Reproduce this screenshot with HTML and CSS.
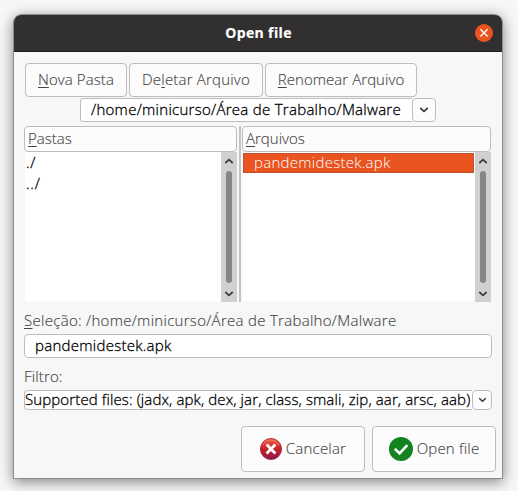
FILE: index.html
```html
<!DOCTYPE html>
<html lang="pt-BR">
<head>
<meta charset="utf-8">
<title>Open file</title>
<link rel="stylesheet" href="styles.css">
</head>
<body>
<main class="window">
  <header class="titlebar">
    <h1>Open file</h1>
    <button class="close" aria-label="Fechar"><svg width="18" height="18" viewBox="0 0 18 18"><path d="M5.4 5.3l7.2 7.2m0-7.2l-7.2 7.2" fill="none" stroke="#fff" stroke-width="1.3"/></svg></button>
  </header>
  <div class="content">
    <div class="toolbar">
      <button class="btn new"><span><u>N</u>ova Pasta</span></button>
      <button class="btn delete"><span>De<u>l</u>etar Arquivo</span></button>
      <button class="btn rename"><span><u>R</u>enomear Arquivo</span></button>
    </div>
    <div class="combo path">
      <div class="value"><span>/home/minicurso/Área de Trabalho/Malware</span></div>
      <button class="drop" aria-label="Abrir"><svg width="10" height="6" viewBox="0 0 10 6"><path d="M1.3 1l3.7 3.4L8.7 1"/></svg></button>
    </div>
    <div class="panes">
      <section class="pane folders">
        <div class="head"><span><u>P</u>astas</span></div>
        <div class="body">
          <div class="list"><div class="row">./</div><div class="row">../</div></div>
          <div class="scroll"><svg width="10" height="6" viewBox="0 0 10 6"><path d="M1.3 5l3.7-3.4L8.7 5"/></svg><i class="thumb"></i><svg width="10" height="6" viewBox="0 0 10 6"><path d="M1.3 1l3.7 3.4L8.7 1"/></svg></div>
        </div>
      </section>
      <div class="divider"></div>
      <section class="pane files">
        <div class="head"><span><u>A</u>rquivos</span></div>
        <div class="body">
          <div class="list"><div class="row selected"><span>pandemidestek.apk</span></div></div>
          <div class="scroll"><svg width="10" height="6" viewBox="0 0 10 6"><path d="M1.3 5l3.7-3.4L8.7 5"/></svg><i class="thumb"></i><svg width="10" height="6" viewBox="0 0 10 6"><path d="M1.3 1l3.7 3.4L8.7 1"/></svg></div>
        </div>
      </section>
    </div>
    <div class="label selection"><span><u>S</u>eleção: /home/minicurso/Área de Trabalho/Malware</span></div>
    <div class="entry"><span>pandemidestek.apk</span></div>
    <div class="label filter"><span>Filtro:</span></div>
    <div class="combo types">
      <div class="value"><span>Supported files: (jadx, apk, dex, jar, class, smali, zip, aar, arsc, aab)</span></div>
      <button class="drop" aria-label="Abrir"><svg width="9" height="6" viewBox="0 0 10 6"><path d="M1.3 1l3.7 3.4L8.7 1"/></svg></button>
    </div>
    <footer class="actions">
      <button class="btn cancel">
        <svg width="22" height="22" viewBox="0 0 22 22"><defs><linearGradient id="red" x2="0" y2="1"><stop offset="0" stop-color="#f0604b"/><stop offset=".5" stop-color="#cd202b"/><stop offset="1" stop-color="#85164c"/></linearGradient></defs><circle cx="11" cy="11" r="10.6" fill="url(#red)" stroke="#9f2330" stroke-width=".8"/><path d="M3 7a9 9 0 0 1 16 0" fill="none" stroke="#f99a82" stroke-opacity=".6"/><path d="M6.6 6.6l8.8 8.8m0-8.8l-8.8 8.8" stroke="#fff" stroke-width="2.8" fill="none"/></svg>
        <span>Cancelar</span>
      </button>
      <button class="btn accept">
        <svg width="24" height="24" viewBox="0 0 24 24"><circle cx="12" cy="12" r="12" fill="#12831f"/><path d="M5.8 11.8l4.8 4.6 7.7-8.2" fill="none" stroke="#fff" stroke-width="2.6"/></svg>
        <span>Open file</span>
      </button>
    </footer>
  </div>
</main>
</body>
</html>
```
FILE: styles.css
```css
* { box-sizing: border-box; }
body {
  margin: 0;
  padding: 15px 16px 13px 14px;
  height: 491px;
  overflow: hidden;
  background: #f7f7f7;
  font: 300 15px/20px "Open Sans", "Noto Sans", sans-serif;
  color: #464646;
  -webkit-text-stroke: .15px;
}
button { font: inherit; color: inherit; padding: 0; margin: 0; }
span { white-space: nowrap; }
u { text-decoration-thickness: 1px; text-underline-offset: 2px; }
svg { display: block; flex: none; }
.window {
  width: 488px;
  height: 463px;
  border-radius: 8px 8px 0 0;
  background: #f7f7f7;
  box-shadow: 0 0 0 1px #8c8c8c, 0 3px 14px 1px rgba(0, 0, 0, .48);
}
.titlebar {
  display: grid;
  grid-template-columns: 28px 1fr 27px;
  align-items: center;
  height: 37px;
  border-radius: 7px 7px 0 0;
  border-bottom: 1px solid #1d1b1b;
  background: #322f30;
  color: #fff;
}
h1 {
  grid-column: 2;
  margin: 0;
  text-align: center;
  font: 700 14px/20px "Open Sans", sans-serif;
  letter-spacing: .35px;
}
.close {
  width: 18px;
  height: 18px;
  border: 0;
  border-radius: 50%;
  background: #e95420;
}
.content { padding: 11px 6px 0 10px; }
.btn {
  display: flex;
  align-items: center;
  justify-content: center;
  border: 1px solid #bdbdbd;
  border-radius: 4px;
  background: #fcfcfc;
}
.btn span { padding-bottom: 2px; }
.toolbar { display: flex; gap: 2px; padding-left: 1px; }
.toolbar .btn { height: 34px; }
.new { width: 102px; letter-spacing: .1px; }
.delete { width: 134px; letter-spacing: .2px; }
.rename { width: 152px; letter-spacing: .05px; }
.combo { display: flex; color: #000; }
.value {
  border: 1px solid #bdbdbd;
  border-right: 0;
  border-radius: 4px 0 0 4px;
  background: #fff;
}
.value, .entry, .list { -webkit-text-stroke: .3px; }
.drop {
  display: flex;
  align-items: center;
  justify-content: center;
  border: 1px solid #bdbdbd;
  border-radius: 4px;
  background: #fcfcfc;
}
.drop path, .scroll path { fill: none; stroke: #3b3b3b; stroke-width: 1.7; }
.path { height: 24px; margin: 1px 0 0 56px; }
.path .value { width: 332px; padding-left: 10px; line-height: 20px; letter-spacing: .28px; }
.path .drop { width: 24px; }
.panes { display: flex; height: 176px; margin-top: 4px; }
.folders { width: 213px; }
.files { width: 249px; }
.head {
  height: 26px;
  padding-left: 3px;
  border: 1px solid #bdbdbd;
  border-radius: 4px;
  background: #fcfcfc;
  line-height: 23px;
}
.body { display: flex; height: 150px; padding-left: 1px; }
.list { flex: 1; height: 149px; padding-top: 1px; background: #fff; color: #000; }
.row { height: 21px; padding-left: 1px; line-height: 18px; letter-spacing: .8px; }
.selected {
  width: calc(100% - 1px);
  height: 20px;
  padding-left: 10px;
  border: 1px solid #bd522f;
  background: #e95420;
  color: #fff;
  line-height: 16px;
  letter-spacing: .27px;
  -webkit-text-stroke: 0;
}
.scroll {
  display: flex;
  flex-direction: column;
  align-items: center;
  width: 16px;
  padding: 6px 0 5px;
  background: #d0d0d0;
}
.thumb { width: 6px; height: 112px; margin: 7px 0 8px; border-radius: 3px; background: #868686; }
.divider { width: 2px; margin: 0 1px 0 2px; background: #c4c4c4; }
.label { height: 20px; line-height: 18px; }
.selection { margin-top: 9px; letter-spacing: .29px; }
.entry {
  width: 468px;
  height: 24px;
  margin-top: 3px;
  padding-left: 10px;
  border: 1px solid #bdbdbd;
  border-radius: 4px;
  background: #fff;
  color: #000;
  line-height: 20px;
  letter-spacing: .27px;
}
.filter { margin-top: 9px; letter-spacing: .15px; }
.types { height: 20px; margin-top: 3px; }
.types .value { width: 448px; line-height: 16px; letter-spacing: .12px; }
.types .drop { width: 20px; }
.actions { display: flex; justify-content: flex-end; gap: 7px; margin-top: 16px; }
.actions .btn { width: 124px; height: 46px; gap: 4px; letter-spacing: .2px; }
```
